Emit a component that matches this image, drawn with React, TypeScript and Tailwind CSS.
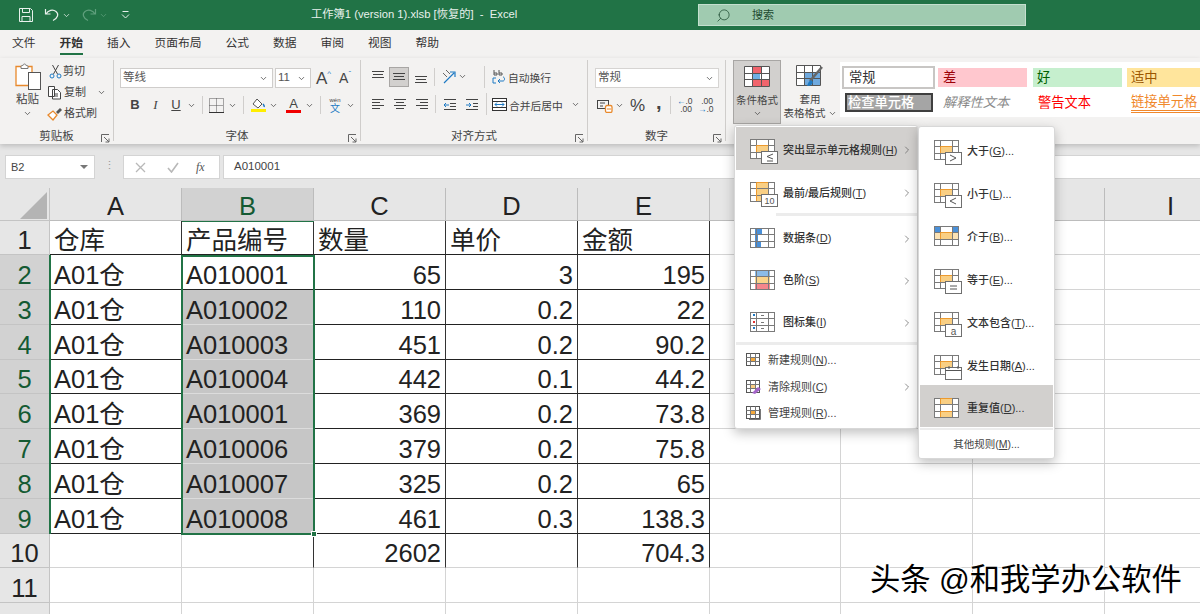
import type { ReactNode } from "react";
import { ChevronDown, ChevronRight, Search } from "lucide-react";

const cjk = "font-['Liberation_Sans','Noto_Sans_CJK_SC',sans-serif]";

const rows: (string | number)[][] = [
  ["仓库", "产品编号", "数量", "单价", "金额"],
  ["A01仓", "A010001", 65, 3, 195],
  ["A01仓", "A010002", 110, 0.2, 22],
  ["A01仓", "A010003", 451, 0.2, 90.2],
  ["A01仓", "A010004", 442, 0.1, 44.2],
  ["A01仓", "A010001", 369, 0.2, 73.8],
  ["A01仓", "A010006", 379, 0.2, 75.8],
  ["A01仓", "A010007", 325, 0.2, 65],
  ["A01仓", "A010008", 461, 0.3, 138.3],
  ["", "", 2602, "", 704.3],
  [],
  [],
];

const colNames = ["A", "B", "C", "D", "E", "F", "G", "H", "I"];

function Chev({ className = "" }: { className?: string }) {
  return <ChevronDown size={9} strokeWidth={2} className={`text-[#444] shrink-0 ${className}`} />;
}

function Lines({ spans }: { spans: [number, number, number][] }) {
  return (
    <svg width="14" height="14" viewBox="0 0 14 14" stroke="#444" strokeWidth="1">
      {spans.map(([y, a, b], i) => (
        <line key={i} x1={a} x2={b} y1={y + 0.5} y2={y + 0.5} />
      ))}
    </svg>
  );
}

// cell-grid glyph used all over the conditional formatting menu
function GridIcon({ fills = [], lines = "#7a7a7a", badge }: { fills?: { x: number; y: number; w: number; h: number; c: string }[]; lines?: string; badge?: ReactNode }) {
  return (
    <svg width="28" height="26" viewBox="0 0 28 26" className="shrink-0">
      <rect x="0.5" y="0.5" width="24" height="19" fill="#fff" />
      {fills.map((f, i) => (
        <rect key={i} x={f.x} y={f.y} width={f.w} height={f.h} fill={f.c} />
      ))}
      <g stroke={lines} fill="none">
        <rect x="0.5" y="0.5" width="24" height="19" />
        <path d="M6.500 .5v19M18.500 .5v19M.5 6.500h24M.5 13.500h24" />
      </g>
      {fills
        .filter((f) => f.c === "#f9cf84")
        .map((f, i) => (
          <path key={i} d={`M${f.x - 0.5} ${f.y + f.h}V${f.y - 0.5}H${f.x + f.w}`} stroke="#ed9a2e" fill="none" />
        ))}
      {badge}
    </svg>
  );
}

const hi = { x: 7, y: 7, w: 11, h: 6, c: "#f9cf84" };

function Badge({ children }: { children: ReactNode }) {
  return (
    <g>
      <rect x="11.5" y="12.5" width="16" height="12" fill="#fff" stroke="#6f6f6f" />
      {children}
    </g>
  );
}

function Accel({ label, k, tail = "" }: { label: string; k: string; tail?: string }) {
  return (
    <span className="whitespace-nowrap">
      {label}(<span className="underline">{k}</span>){tail}
    </span>
  );
}

function MenuRow({ icon, label, k, tail, active, arrow = true, height = "h-[42px]" }: { icon: ReactNode; label: string; k: string; tail?: string; active?: boolean; arrow?: boolean; height?: string }) {
  return (
    <div className={`flex items-center pl-[14px] pt-[3px] text-[11px] text-[#333] font-medium ${height} ${active ? "bg-[#d2d0ce]" : ""}`}>
      <div className="w-[33px] pt-[4px]">{icon}</div>
      <Accel label={label} k={k} tail={tail} />
      {arrow && <ChevronRight size={12} strokeWidth={1.3} className="ml-auto mr-[4px] text-[#555]" />}
    </div>
  );
}

function SmallRow({ icon, label, k, tail, arrow }: { icon: ReactNode; label: string; k: string; tail?: string; arrow?: boolean }) {
  return (
    <div className="flex items-center h-[26.5px] pl-[10px] text-[11px] text-[#444]">
      <div className="w-[22px]">{icon}</div>
      <Accel label={label} k={k} tail={tail} />
      {arrow && <ChevronRight size={12} strokeWidth={1.3} className="ml-auto mr-[4px] text-[#555]" />}
    </div>
  );
}

function SmallGrid({ fill, extra }: { fill: string; extra?: ReactNode }) {
  return (
    <svg width="15" height="14" viewBox="0 0 15 14">
      <rect x="0.5" y="0.5" width="13" height="12" fill="#fff" stroke="#555" />
      <rect x="4" y="4" width="6" height="5" fill={fill} />
      <path d="M4.5 .5v12M9.5 .5v12M.5 4.5h13M.5 8.5h13" stroke="#777" fill="none" />
      {extra}
    </svg>
  );
}

function Group({ width, label, launcher = true, children }: { width: string; label: string; launcher?: boolean; children: ReactNode }) {
  return (
    <div className={`relative flex flex-col shrink-0 border-r border-[#cfcdcb] mt-[2px] mb-[3px] ${width}`}>
      <div className="flex-1 min-h-0">{children}</div>
      <div className="h-[16px] text-center text-[11.5px] leading-[22px] text-[#444]">{label}</div>
      {launcher && (
        <svg width="9" height="9" viewBox="0 0 9 9" className="absolute right-[3px] bottom-[-2px]" fill="none" stroke="#666">
          <path d="M.5 8V.5H8M3 3l5 5M8 4.500V8H4.500" />
        </svg>
      )}
    </div>
  );
}

function Divider({ className = "" }: { className?: string }) {
  return <div className={`w-px h-[18px] bg-[#d0cecc] shrink-0 ${className}`} />;
}

function Combo({ text, width, className = "" }: { text: string; width: string; className?: string }) {
  return (
    <div className={`flex items-center h-[20px] bg-white border border-[#cfcdcb] pl-[2px] pr-[4px] text-[11.5px] text-[#555] shrink-0 ${width} ${className}`}>
      <span className="flex-1">{text}</span>
      <Chev />
    </div>
  );
}

function StyleChip({ text, className }: { text: string; className: string }) {
  return <div className={`flex items-center shrink-0 text-[13.25px] ${className}`}>{text}</div>;
}

export default function App() {
  return (
    <div className={`relative w-[1200px] h-[614px] overflow-hidden bg-white ${cjk}`}>
      {/* title bar */}
      <div className="relative flex items-center h-[30px] bg-[#217346] text-[#e8f1ec]">
        <svg width="16" height="16" viewBox="0 0 16 16" fill="none" stroke="#e8f1ec" className="ml-[18px]">
          <path d="M1.500 1.500h11l2 2v11h-13zM4.500 1.500v4h7v-4M4 14.500v-5h8v5" />
        </svg>
        <svg width="16" height="16" viewBox="0 0 16 16" fill="none" stroke="#e8f1ec" strokeWidth="1.2" className="ml-[10px]">
          <path d="M1.500 2v5h5M2 7c2-4 7-5 10-2.500s2 6.500-3 9" />
        </svg>
        <Chev className="ml-[2px] !text-[#e8f1ec]" />
        <svg width="16" height="16" viewBox="0 0 16 16" fill="none" stroke="#5f9f7c" strokeWidth="1.2" className="ml-[10px]">
          <path d="M14.500 2v5h-5M14 7c-2-4-7-5-10-2.500s-2 6.500 3 9" />
        </svg>
        <Chev className="ml-[2px] !text-[#5f9f7c]" />
        <svg width="9" height="9" viewBox="0 0 9 9" fill="none" stroke="#e8f1ec" className="ml-[13px]">
          <path d="M1.500.5h6M1 3.500l3.500 3.500L8 3.500" />
        </svg>
        <div className="absolute left-[311px] top-[6px] text-[11.25px] leading-[16px] whitespace-pre">工作簿1 (version 1).xlsb [恢复的]  -  Excel</div>
        <div className="absolute left-[698px] top-[4px] flex items-center w-[328px] h-[22px] bg-[#a0cbb0] border border-[#c4dfce] text-[#1d4a30]">
          <Search size={15} strokeWidth={1.2} className="ml-[17px] -scale-x-100" />
          <span className="ml-[21px] text-[11px]">搜索</span>
        </div>
      </div>

      {/* tabs */}
      <div className="flex h-[28px] bg-[#f3f2f1] pl-[12px] gap-[24px] text-[11.75px] text-[#333]">
        {["文件", "开始", "插入", "页面布局", "公式", "数据", "审阅", "视图", "帮助"].map((t) => (
          <div key={t} className={`relative leading-[26px] ${t === "开始" ? "font-bold" : ""}`}>
            {t}
            {t === "开始" && <div className="absolute left-0 right-0 bottom-[3px] h-[2px] bg-[#217346]" />}
          </div>
        ))}
      </div>

      {/* ribbon */}
      <div className="relative z-10 flex h-[86px] bg-[#f3f2f1] shadow-[0_2px_5px_rgba(0,0,0,0.18)] text-[#444]">
        <Group width="w-[114px]" label="剪贴板">
          <div className="flex">
            <div className="flex flex-col items-center w-[50px] pt-[2px] pl-[5px]">
              <svg width="26" height="28" viewBox="0 0 26 28" fill="none">
                <path d="M1 4.500h16v19H1z" fill="#fff" stroke="#e8892c" strokeWidth="1.300" />
                <path d="M6 4.500c0-1 1-1 2-1 0-2 3-2 3 0 1 0 2 0 2 1v2H6z" fill="#fff" stroke="#777" />
                <rect x="13.500" y="10.500" width="12" height="17" fill="#fff" stroke="#555" />
              </svg>
              <div className="text-[11.5px] leading-[16px] mt-[1px]">粘贴</div>
              <Chev className="mt-[2px]" />
            </div>
            <div className="flex flex-col pt-[1px] -ml-[1px] text-[11px] leading-[21px]">
              <div className="flex items-center h-[21px]">
                <svg width="13" height="15" viewBox="0 0 13 15" fill="none" stroke="#444" className="mr-[1px]">
                  <path d="M3.500 1l5 9M9.500 1l-5 9" />
                  <circle cx="3" cy="12" r="2" stroke="#1e7ac4" />
                  <circle cx="10" cy="12" r="2" stroke="#1e7ac4" />
                </svg>
                剪切
              </div>
              <div className="flex items-center h-[21px] -ml-[2px]">
                <svg width="16" height="15" viewBox="0 0 16 15" fill="none" stroke="#444" className="mr-[1px]">
                  <path d="M1.500 1.500h6v10h-6zM5.500 4.500h5l3 3v6.500h-8z" fill="#fff" />
                  <path d="M8 9h3M8 11h3" />
                </svg>
                复制
                <Chev className="ml-[11px]" />
              </div>
              <div className="flex items-center h-[21px] -ml-[2px]">
                <svg width="16" height="15" viewBox="0 0 16 15" fill="none" className="mr-[1px]">
                  <path d="M1 9l5-4 4 4-4 5z" fill="#fff" stroke="#e8892c" strokeWidth="1.300" />
                  <path d="M9 6l4-4 2 2-4 4z" fill="#555" />
                </svg>
                格式刷
              </div>
            </div>
          </div>
        </Group>

        <Group width="w-[247px]" label="字体">
          <div className="flex items-center pl-[6px] pt-[8px]">
            <Combo text="等线" width="w-[153px]" />
            <Combo text="11" width="w-[36px]" className="ml-[2px]" />
            <span className="ml-[5px] text-[17px] leading-none">A</span>
            <span className="text-[8px] text-[#1e7ac4] -mt-[8px] mr-[8px]">^</span>
            <span className="text-[14px] leading-none">A</span>
            <span className="text-[8px] text-[#1e7ac4] -mt-[8px]">ˇ</span>
          </div>
          <div className="flex items-center h-[22px] mt-[6px] pl-[11px] text-[13px]">
            <span className="w-[20px] text-center font-bold">B</span>
            <span className="w-[21px] text-center italic font-['Liberation_Serif',serif]">I</span>
            <span className="w-[20px] text-center underline">U</span>
            <Chev className="ml-[1px]" />
            <Divider className="ml-[6px]" />
            <svg width="15" height="15" viewBox="0 0 15 15" fill="none" stroke="#555" strokeDasharray="1 1" className="ml-[6px]">
              <path d="M.5.500h14v14H.5zM7.500.500v14M.5 7.500h14" />
              <path d="M0 14.500h15" stroke="#333" strokeDasharray="none" />
            </svg>
            <Chev className="ml-[4px]" />
            <Divider className="ml-[6px]" />
            <div className="flex flex-col items-center ml-[7px]">
              <svg width="13" height="11" viewBox="0 0 13 11" fill="none">
                <path d="M5 1l5 5-4 4-5-4z" fill="#fff" stroke="#555" />
                <path d="M11 6c1 1 1.500 2 1 3" stroke="#1e7ac4" strokeWidth="1.500" />
              </svg>
              <div className="w-[15px] h-[3px] bg-[#ffee00]" />
            </div>
            <Chev className="ml-[3px]" />
            <div className="flex flex-col items-center ml-[8px] w-[15px] text-[13px] leading-[11px]">
              A
              <div className="w-[15px] h-[3px] bg-[#f00000] mt-[1px]" />
            </div>
            <Chev className="ml-[4px]" />
            <Divider className="ml-[6px]" />
            <div className="flex flex-col items-center ml-[7px] w-[14px] text-[6px] leading-[7px]">
              wén
              <span className="text-[10px] leading-[9px] text-[#1e7ac4]">文</span>
            </div>
            <Chev className="ml-[4px]" />
          </div>
        </Group>

        <Group width="w-[227px]" label="对齐方式">
          <div className="flex items-center pl-[10px] h-[27px] mt-[3px]">
            <div className="w-[14px]"><Lines spans={[[1, 1, 13], [4, 2, 12], [7, 1, 13]]} /></div>
            <div className="flex items-center justify-center w-[20px] h-[20px] ml-[4px] bg-[#d2d0ce] border border-[#a8a6a4]"><Lines spans={[[3, 1, 13], [6, 2, 12], [9, 1, 13]]} /></div>
            <div className="w-[14px] ml-[5px]"><Lines spans={[[6, 1, 13], [9, 2, 12], [12, 1, 13]]} /></div>
            <Divider className="ml-[6px]" />
            <svg width="16" height="15" viewBox="0 0 16 15" fill="none" className="ml-[6px]">
              <path d="M2 4l4 4M5 1l4 4" stroke="#666" />
              <path d="M3 14l10-10M9 3h5v5" stroke="#1e7ac4" strokeWidth="1.200" />
            </svg>
            <Chev className="ml-[1px]" />
            <Divider className="ml-[17px] !h-[22px]" />
            <svg width="14" height="16" viewBox="0 0 14 16" fill="none" className="ml-[7px]">
              <path d="M2 6V1M2 4h3v2H2M7 1v5h3V4H7" stroke="#555" />
              <path d="M4 9H1v5h3M6 12h5c2 0 2-4 0-4M6 12l2-2M6 12l2 2" stroke="#1e7ac4" />
            </svg>
            <span className="ml-[2px] pt-[3px] text-[10.75px]">自动换行</span>
          </div>
          <div className="flex items-center pl-[10px] h-[22px] mt-[3px]">
            <div className="w-[14px]"><Lines spans={[[2, 1, 13], [5, 1, 9], [8, 1, 13], [11, 1, 9]]} /></div>
            <div className="w-[14px] ml-[8px]"><Lines spans={[[2, 1, 13], [5, 3, 11], [8, 1, 13], [11, 3, 11]]} /></div>
            <div className="w-[14px] ml-[8px]"><Lines spans={[[2, 1, 13], [5, 5, 13], [8, 1, 13], [11, 5, 13]]} /></div>
            <Divider className="ml-[6px]" />
            <svg width="14" height="14" viewBox="0 0 14 14" fill="none" className="ml-[7px]">
              <path d="M1 2.500h12M7 6.500h6M7 9.500h6M1 12.500h12" stroke="#444" />
              <path d="M6 8H1M1 8l2-2M1 8l2 2" stroke="#1e7ac4" />
            </svg>
            <svg width="14" height="14" viewBox="0 0 14 14" fill="none" className="ml-[8px]">
              <path d="M1 2.500h12M8 6.500h5M8 9.500h5M1 12.500h12" stroke="#444" />
              <path d="M1 8h5M6 8L4 6M6 8l-2 2" stroke="#1e7ac4" />
            </svg>
            <Divider className="ml-[7px] !h-[22px]" />
            <svg width="15" height="15" viewBox="0 0 15 15" fill="none" className="ml-[5px]">
              <rect x="0.500" y="1.500" width="14" height="12" fill="#fff" stroke="#333" />
              <path d="M.5 4.500h14M.5 10.500h14" stroke="#333" />
              <path d="M3 7.500h9M3 7.500l2-2M3 7.500l2 2M12 7.500l-2-2M12 7.500l-2 2" stroke="#1e7ac4" />
            </svg>
            <span className="ml-[2px] pt-[4px] text-[10.75px]">合并后居中</span>
            <Chev className="ml-[8px]" />
          </div>
        </Group>

        <Group width="w-[138px]" label="数字">
          <Combo text="常规" width="w-[124px]" className="ml-[7px] mt-[8px] border-[#d6d4d2]" />
          <div className="flex items-center h-[22px] mt-[6px] pl-[9px]">
            <svg width="16" height="15" viewBox="0 0 16 15" fill="none" className="shrink-0">
              <rect x="0.500" y="2.500" width="11" height="8" stroke="#444" />
              <path d="M3 5h5M3 8h3" stroke="#444" />
              <rect x="8.500" y="7.500" width="6.500" height="7" rx="1.500" fill="#fff" stroke="#e8892c" strokeWidth="1.300" />
              <path d="M10 11h4" stroke="#e8892c" />
            </svg>
            <Chev className="ml-[2px]" />
            <span className="ml-[6px] text-[17px] leading-none w-[16px]">%</span>
            <span className="ml-[10px] text-[20px] leading-none font-bold w-[8px] -mt-[6px]">,</span>
            <Divider className="ml-[6px]" />
            <div className="flex flex-col ml-[6px] w-[15px] text-[8.5px] leading-[8px] text-right shrink-0">
              <span><span className="text-[#1e7ac4]">←</span>.0</span>
              <span>.00</span>
            </div>
            <div className="flex flex-col ml-[6px] w-[15px] text-[8.5px] leading-[8px] text-right shrink-0">
              <span>.00</span>
              <span><span className="text-[#1e7ac4]">→</span>.0</span>
            </div>
          </div>
        </Group>

        <div className="flex flex-1 min-w-0">
          <div className="flex flex-col items-center w-[48px] h-[64px] ml-[7px] mt-[2px] bg-[#d2d0ce] border border-[#a8a6a4] shrink-0 text-[10.5px] leading-[14px]">
            <svg width="26" height="22" viewBox="0 0 26 22" className="mt-[5px] shrink-0">
              <rect x="0.500" y="0.500" width="25" height="20" fill="#fff" />
              <rect x="8" y="1" width="10" height="6" fill="#f0646c" />
              <rect x="8" y="7" width="8" height="6" fill="#6fb0e4" />
              <rect x="16" y="14" width="9" height="6" fill="#f0646c" />
              <rect x="8" y="14" width="8" height="6" fill="#f0646c" />
              <path d="M.5.500h25v20H.5zM8.500.500v20M17.500.500v20M.5 7.500h25M.5 13.500h25" fill="none" stroke="#555" />
            </svg>
            <span className="mt-[5px] whitespace-nowrap">条件格式</span>
            <Chev className="mt-[2px]" />
          </div>
          <div className="flex flex-col items-center w-[50px] ml-[4px] mt-[2px] shrink-0 text-[10.5px] leading-[14px]">
            <svg width="28" height="23" viewBox="0 0 28 23" className="mt-[5px] shrink-0">
              <rect x="0.500" y="0.500" width="24" height="20" fill="#fff" />
              <rect x="9" y="7" width="15" height="13" fill="#6fa9de" />
              <path d="M.5.500h24v20H.5zM8.500.500v20M16.500.500v20M.5 7.500h24M.5 13.500h24" fill="none" stroke="#555" />
              <path d="M26 2L14 16" stroke="#666" strokeWidth="2.500" />
              <path d="M15 15c-2 1-3 3-4 6 3 0 5-1 6-4z" fill="#1e7ac4" />
            </svg>
            <span className="mt-[4px]">套用</span>
            <span className="flex items-center whitespace-nowrap">表格格式<Chev className="ml-[2px]" /></span>
          </div>
          <div className="flex flex-col flex-1 min-w-0 h-[55px] ml-[5px] mt-[4px] bg-white overflow-hidden pl-[2px] pt-[4px]">
            <div className="flex items-center">
              <StyleChip text="常规" className="w-[93px] h-[23px] border-2 border-[#c8c6c4] pl-[5px] pt-[1px] text-[#333]" />
              <StyleChip text="差" className="w-[89px] h-[19px] ml-[3px] bg-[#ffc7ce] pl-[5px] pt-[1px] text-[#9c0006]" />
              <StyleChip text="好" className="w-[89px] h-[19px] ml-[6px] bg-[#c6efce] pl-[4px] pt-[1px] text-[#006100]" />
              <StyleChip text="适中" className="w-[89px] h-[19px] ml-[5px] bg-[#ffe59c] pl-[4px] pt-[1px] text-[#9c5700]" />
            </div>
            <div className="flex items-center mt-[3px]">
              <StyleChip text="检查单元格" className="w-[88px] h-[19px] ml-[3px] bg-[#a5a5a5] border-2 border-double border-[#3f3f3f] pl-[1px] text-white font-medium" />
              <StyleChip text="解释性文本" className="ml-[10px] w-[89px] pt-[1px] italic text-[#8a8a8a]" />
              <StyleChip text="警告文本" className="ml-[5px] w-[89px] pl-[1px] pt-[1px] text-[#ff0000]" />
              <StyleChip text="链接单元格" className="ml-[5px] w-[89px] h-[21px] pt-[1px] border-b-[3px] border-double border-[#f0882c] text-[#f0882c]" />
            </div>
          </div>
        </div>
      </div>

      {/* formula bar */}
      <div className="flex h-[44px] bg-[#e6e6e6] pt-[11px] pl-[5px] text-[#444] text-[11px]">
        <div className="flex items-center w-[90px] h-[24px] bg-white border border-[#d4d4d4] pl-[5px] shrink-0">
          <span className="flex-1">B2</span>
          <span className="w-0 h-0 mr-[6px] border-x-[4px] border-t-[4px] border-x-transparent border-t-[#777]" />
        </div>
        <div className="w-[28px] text-center text-[#999] leading-[20px] shrink-0">⋮</div>
        <div className="flex items-center w-[97px] h-[24px] bg-white border border-[#d4d4d4] shrink-0 text-[#b0b0b0]">
          <svg width="11" height="11" viewBox="0 0 11 11" stroke="#b8b8b8" strokeWidth="1.300" className="ml-[11px]"><path d="M1 1l9 9M10 1l-9 9" /></svg>
          <svg width="12" height="11" viewBox="0 0 12 11" stroke="#b8b8b8" strokeWidth="1.600" fill="none" className="ml-[21px]"><path d="M1 6l3.500 4L11 1" /></svg>
          <span className="ml-[17px] italic text-[#555] font-['Liberation_Serif',serif] text-[12px]">fx</span>
        </div>
        <div className="flex items-center flex-1 h-[24px] ml-[3px] bg-white border-y border-l border-[#d4d4d4] pl-[10px] text-[11.5px]">A010001</div>
      </div>

      {/* sheet */}
      <div className="relative grid grid-cols-[50px_132px_132px_132px_132px_132px_131px_132px_132px_132px] grid-rows-[33px_34px_35px_35px_35px_34px_35px_35px_35px_35px_34px_35px_35px] text-[25.5px] text-[#222]">
        <div className="relative bg-[#e6e6e6] border-r border-b border-[#c4c4c4]">
          <div className="absolute left-[20px] top-[4px] w-0 h-0 border-l-[27px] border-b-[27px] border-l-transparent border-b-[#b4b4b4]" />
        </div>
        {colNames.map((c) => (
          <div key={c} className={`flex items-center justify-center pt-[4px] border-r border-b border-[#bcbcbc] ${c === "B" ? "bg-[#d2d2d2] text-[#145a32]" : "bg-[#e6e6e6]"}`}>
            {c}
          </div>
        ))}

        {rows.map((row, r) => {
          const sel = r >= 1 && r <= 8;
          return [
            <div key={`h${r}`} className={`flex items-center justify-center pt-[6px] border-r border-b border-[#c4c4c4] ${sel ? "bg-[#d2d2d2] text-[#145a32]" : "bg-[#e6e6e6]"}`}>
              {r < 11 ? r + 1 : ""}
            </div>,
            ...colNames.map((_, c) => {
              const v = row[c];
              const inData = r <= 8 && c <= 4;
              const rowTen = r === 9 && c >= 1 && c <= 4;
              const gray = c === 1 && r >= 2 && r <= 8;
              const bottom = inData ? (gray && r < 8 ? "border-b-[#dcdcdc]" : "border-b-[#222]") : "border-b-[#d4d4d4]";
              const right = inData || rowTen ? "border-r-[#333]" : "border-r-[#d4d4d4]";
              return (
                <div
                  key={`${r}-${c}`}
                  className={`flex items-center border-r border-b overflow-hidden whitespace-nowrap px-[4px] pt-[6px] ${bottom} ${right} ${typeof v === "number" ? "justify-end" : ""} ${gray ? "bg-[#c6c6c6]" : ""}`}
                >
                  {v}
                </div>
              );
            }),
          ];
        })}

        {/* selection outlines */}
        <div className="absolute left-[182px] top-[33px] w-[132px] h-[1px] bg-[#217346]" />
        <div className="absolute left-[49px] top-[67px] w-[2px] h-[279px] bg-[#217346]" />
        <div className="absolute left-[181px] top-[67px] w-[134px] h-[280px] border-2 border-[#217346]" />
        <div className="absolute left-[311px] top-[343px] w-[6px] h-[6px] bg-[#217346] border border-white" />
      </div>

      {/* conditional formatting menu */}
      <div className="absolute left-[734px] top-[125px] z-20 w-[184px] h-[304px] bg-white border border-[#d8d8d8] rounded-[3px] shadow-[0_4px_12px_rgba(0,0,0,0.25)] pt-[1px] pl-[1px]">
        <MenuRow active height="h-[43px]" label="突出显示单元格规则" k="H" icon={<GridIcon fills={[hi]} badge={<Badge><path d="M23 15l-6 2.500 6 2.500M17 22h6" stroke="#555" fill="none" /></Badge>} />} />
        <MenuRow height="h-[43px]" label="最前/最后规则" k="T" icon={<GridIcon fills={[{ x: 7, y: 1, w: 11, h: 18, c: "#f9cf84" }]} badge={<Badge><text x="19.500" y="22" fontSize="9" textAnchor="middle" fill="#555">10</text></Badge>} />} />
        <div className="h-[3px] ml-[40px] bg-[#ececec]" />
        <MenuRow label="数据条" k="D" icon={<GridIcon fills={[{ x: 5, y: 1, w: 7, h: 6, c: "#4a90d9" }, { x: 5, y: 7, w: 3, h: 6, c: "#4a90d9" }, { x: 5, y: 14, w: 6, h: 5, c: "#4a90d9" }]} />} />
        <MenuRow label="色阶" k="S" icon={<GridIcon fills={[{ x: 5, y: 1, w: 15, h: 6, c: "#8cbce8" }, { x: 5, y: 7, w: 15, h: 6, c: "#fbd48a" }, { x: 5, y: 14, w: 15, h: 5, c: "#f5868c" }]} />} />
        <MenuRow label="图标集" k="I" icon={<GridIcon badge={<g><rect x="3" y="2" width="2" height="2" fill="#1e7ac4" /><rect x="3" y="9" width="2" height="2" fill="#e03030" /><rect x="3" y="15" width="2" height="2" fill="#1e7ac4" /><path d="M11 3.500h3M11 10.500h3M11 16.500h3" stroke="#777" /></g>} />} />
        <div className="h-[3px] bg-[#ececec]" />
        <div className="pt-[2px]">
          <SmallRow label="新建规则" k="N" tail="..." icon={<SmallGrid fill="#f4a93c" />} />
          <SmallRow label="清除规则" k="C" arrow icon={<SmallGrid fill="#f9cf84" extra={<path d="M6 13l6-6 3 2-6 5z" fill="#a464c8" />} />} />
          <SmallRow label="管理规则" k="R" tail="..." icon={<SmallGrid fill="#f4a93c" extra={<path d="M14.500 3v10.500H3" stroke="#777" fill="none" />} />} />
        </div>
      </div>

      {/* submenu */}
      <div className="absolute left-[918px] top-[126px] z-30 w-[137px] h-[333px] bg-white border border-[#d8d8d8] rounded-[3px] shadow-[0_4px_12px_rgba(0,0,0,0.25)] pl-px pr-px">
        <div className="flex flex-col">
          {[
            { label: "大于", k: "G", badge: <path d="M16 15l6 3-6 3" stroke="#555" fill="none" /> },
            { label: "小于", k: "L", badge: <path d="M22 15l-6 3 6 3" stroke="#555" fill="none" /> },
            { label: "介于", k: "B", fills: [{ x: 1, y: 1, w: 5, h: 5, c: "#4a90d9" }, { x: 19, y: 1, w: 5, h: 5, c: "#4a90d9" }, { x: 7, y: 7, w: 11, h: 6, c: "#f9cf84" }, { x: 1, y: 7, w: 6, h: 6, c: "#fbe2b4" }, { x: 18, y: 7, w: 6, h: 6, c: "#fbe2b4" }], plain: true },
            { label: "等于", k: "E", badge: <path d="M16 17h7M16 20h7" stroke="#555" fill="none" /> },
            { label: "文本包含", k: "T", badge: <text x="19.500" y="22.500" fontSize="10" textAnchor="middle" fill="#555">a</text> },
            { label: "发生日期", k: "A", badge: <path d="M11.500 15.500h16M15 11v3M24 11v3" stroke="#555" fill="none" /> },
          ].map((m) => (
            <div key={m.label} className="flex items-center h-[43px] pl-[14px] pt-[5px] text-[11px] font-medium text-[#333]">
              <div className="w-[33px] pt-[4px]">
                <GridIcon fills={m.fills ?? [hi]} badge={m.plain ? undefined : <Badge>{m.badge}</Badge>} />
              </div>
              <Accel label={m.label} k={m.k} tail="..." />
            </div>
          ))}
          <div className="flex items-center h-[42px] pl-[14px] pt-[5px] text-[11px] font-medium text-[#333] bg-[#d2d0ce]">
            <div className="w-[33px] pt-[4px]">
              <GridIcon fills={[{ x: 7, y: 1, w: 11, h: 5, c: "#f9cf84" }, { x: 7, y: 14, w: 11, h: 5, c: "#f9cf84" }]} />
            </div>
            <Accel label="重复值" k="D" tail="..." />
          </div>
          <div className="h-[2px] bg-[#ececec] mt-[1px]" />
          <div className="text-center text-[10.5px] text-[#444] leading-[28px]">
            <Accel label="其他规则" k="M" tail="..." />
          </div>
        </div>
      </div>

      {/* watermark */}
      <div className="absolute left-[870px] top-[560px] z-40 text-[30.3px] leading-[40px] whitespace-pre text-black [text-shadow:1px_1px_0_#fff,-1px_-1px_0_#fff,1px_-1px_0_#fff,-1px_1px_0_#fff]">
        头条 @和我学办公软件
      </div>
    </div>
  );
}
